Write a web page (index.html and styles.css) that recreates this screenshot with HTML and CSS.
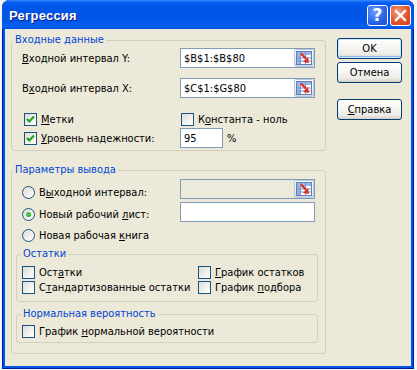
FILE: index.html
```html
<!DOCTYPE html>
<html lang="ru">
<head>
<meta charset="utf-8">
<title>Регрессия</title>
<link rel="stylesheet" href="styles.css">
</head>
<body>
<div class="win">
  <div class="titlebar">
    <span class="ttext">Регрессия</span>
    <div class="tbtns">
      <span class="tb help">?</span>
      <span class="tb close"><svg width="13" height="13" viewBox="0 0 13 13"><path d="M2 2 L11 11 M11 2 L2 11" stroke="#fff" stroke-width="2.4" stroke-linecap="square"/></svg></span>
    </div>
  </div>
  <div class="client">
    <div class="main">
      <div class="grp g1">
        <div class="lg">Входные данные</div>
        <div class="g1in">
          <div class="frow r1">
            <span class="flbl"><u>В</u>ходной интервал Y:</span>
            <div class="field"><span class="ftext">$B$1:$B$80</span><span class="rbtn"><svg width="16" height="14" viewBox="0 0 16 14"><rect x="0.5" y="0.5" width="15" height="13" fill="#fff" stroke="#5B7FC0"/><rect x="1" y="1" width="14" height="3" fill="#9DB5E2"/><rect x="1" y="1" width="3" height="12" fill="#9DB5E2"/><path d="M1 7H15M1 10H15M4.5 1V13M9.5 1V13" stroke="#7A98D0"/><path d="M5 2.5 L9.8 7.5" stroke="#E0301A" stroke-width="2.4"/><path d="M13 12 L7 11 L12 6 Z" fill="#E0301A"/></svg></span></div>
          </div>
          <div class="frow r2">
            <span class="flbl">В<u>х</u>одной интервал X:</span>
            <div class="field"><span class="ftext">$C$1:$G$80</span><span class="rbtn"><svg width="16" height="14" viewBox="0 0 16 14"><rect x="0.5" y="0.5" width="15" height="13" fill="#fff" stroke="#5B7FC0"/><rect x="1" y="1" width="14" height="3" fill="#9DB5E2"/><rect x="1" y="1" width="3" height="12" fill="#9DB5E2"/><path d="M1 7H15M1 10H15M4.5 1V13M9.5 1V13" stroke="#7A98D0"/><path d="M5 2.5 L9.8 7.5" stroke="#E0301A" stroke-width="2.4"/><path d="M13 12 L7 11 L12 6 Z" fill="#E0301A"/></svg></span></div>
          </div>
          <div class="crow r3">
            <label class="opt w157"><span class="cb on"><svg width="11" height="11" viewBox="0 0 11 11"><path d="M2 5 L4.3 7.5 L9 2.5" fill="none" stroke="#21A121" stroke-width="2.2"/></svg></span><span><u>М</u>етки</span></label>
            <label class="opt"><span class="cb"></span><span>К<u>о</u>нстанта - ноль</span></label>
          </div>
          <div class="crow r4">
            <label class="opt w156"><span class="cb on"><svg width="11" height="11" viewBox="0 0 11 11"><path d="M2 5 L4.3 7.5 L9 2.5" fill="none" stroke="#21A121" stroke-width="2.2"/></svg></span><span><u>У</u>ровень надежности:</span></label>
            <div class="field small"><span class="ftext">95</span></div>
            <span class="pct">%</span>
          </div>
        </div>
      </div>

      <div class="grp g2">
        <div class="lg">Параметры вывода</div>
        <div class="g2in">
          <div class="rrow rr1">
            <label class="opt w158 rl1"><span class="rb"></span><span>В<u>ы</u>ходной интервал:</span></label>
            <div class="field dis"><span class="ftext"></span><span class="rbtn"><svg width="16" height="14" viewBox="0 0 16 14"><rect x="0.5" y="0.5" width="15" height="13" fill="#fff" stroke="#5B7FC0"/><rect x="1" y="1" width="14" height="3" fill="#9DB5E2"/><rect x="1" y="1" width="3" height="12" fill="#9DB5E2"/><path d="M1 7H15M1 10H15M4.5 1V13M9.5 1V13" stroke="#7A98D0"/><path d="M5 2.5 L9.8 7.5" stroke="#E0301A" stroke-width="2.4"/><path d="M13 12 L7 11 L12 6 Z" fill="#E0301A"/></svg></span></div>
          </div>
          <div class="rrow rr2">
            <label class="opt w158 rl2"><span class="rb on"><span class="dot"></span></span><span>Новый рабочий <u>л</u>ист:</span></label>
            <div class="field"><span class="ftext"></span></div>
          </div>
          <div class="crow rr3">
            <label class="opt"><span class="rb"></span><span>Новая рабочая <u>к</u>нига</span></label>
          </div>

          <div class="grp sub s1">
            <div class="lg">Остатки</div>
            <div class="s1in">
              <div class="crow">
                <label class="opt w176"><span class="cb"></span><span>Ост<u>а</u>тки</span></label>
                <label class="opt"><span class="cb"></span><span><u>Г</u>рафик остатков</span></label>
              </div>
              <div class="crow">
                <label class="opt w176"><span class="cb"></span><span>С<u>т</u>андартизованные остатки</span></label>
                <label class="opt"><span class="cb"></span><span>График <u>п</u>одбора</span></label>
              </div>
            </div>
          </div>

          <div class="grp sub s2">
            <div class="lg">Нормальная вероятность</div>
            <div class="s2in">
              <div class="crow">
                <label class="opt"><span class="cb"></span><span>График <u>н</u>ормальной вероятности</span></label>
              </div>
            </div>
          </div>
        </div>
      </div>
    </div>

    <div class="btns">
      <button class="btn def">OK</button>
      <button class="btn">Отмена</button>
      <button class="btn help2"><u>С</u>правка</button>
    </div>
  </div>
</div>
</body>
</html>
```

FILE: styles.css
```css
html, body {
  margin: 0;
  padding: 0;
}
body {
  width: 417px;
  height: 370px;
  overflow: hidden;
  background: #f4f4f4;
  font-family: "DejaVu Sans Condensed", "DejaVu Sans", sans-serif;
  font-stretch: condensed;
  font-size: 11px;
  line-height: 13px;
  color: #000;
}
u { text-decoration: underline; text-underline-offset: 1px; }

.win {
  margin-left: 2px;
  width: 412px;
  height: 369px;
  box-sizing: border-box;
  background: #0055E5;
  border-radius: 8px 8px 0 0;
  box-shadow: inset 1px 0 0 #0019CF, inset -1px 0 0 #001DA0, inset 0 -1px 0 #001DA0;
  display: flex;
  flex-direction: column;
}

.titlebar {
  height: 29px;
  flex: none;
  border-radius: 8px 8px 0 0;
  background: linear-gradient(to bottom, #3A8CFF 0px, #0A61F0 2px, #0058EE 5px, #0054E3 14px, #0058EA 22px, #0562F4 26px, #0050DD 29px);
  display: flex;
  align-items: center;
  justify-content: space-between;
  padding: 0 3px 0 7px;
  box-sizing: border-box;
}
.ttext {
  font-family: "Liberation Sans", sans-serif;
  font-stretch: normal;
  font-weight: bold;
  font-size: 13px;
  color: #fff;
  text-shadow: 1px 1px 0 #0A1883;
  letter-spacing: 0.2px;
  margin-top: 1px;
}
.tbtns {
  display: flex;
  gap: 2px;
  margin-top: 1px;
}
.tb {
  width: 21px;
  height: 21px;
  box-sizing: border-box;
  border: 1px solid #fff;
  border-radius: 3px;
  display: flex;
  align-items: center;
  justify-content: center;
}
.help {
  background: radial-gradient(circle at 35% 30%, #6E9CFF 0%, #2B67E8 55%, #1A50D0 100%);
  color: #fff;
  font-family: "DejaVu Sans", sans-serif;
  font-stretch: normal;
  font-weight: bold;
  font-size: 17px;
  line-height: 1;
}
.close {
  background: radial-gradient(circle at 35% 30%, #F39A78 0%, #E2552E 55%, #C8401C 100%);
}

.client {
  flex: 1;
  margin: 0 3px 3px 3px;
  background: #ECE9D8;
  display: flex;
  align-items: flex-start;
}

.main {
  width: 315px;
  margin-left: 6px;
  display: flex;
  flex-direction: column;
}

.grp {
  border: 1px solid #D0D0BF;
  border-radius: 3px;
  box-sizing: border-box;
}
.lg {
  width: fit-content;
  margin: -8px 0 0 1px;
  padding: 0 2px;
  background: #ECE9D8;
  color: #0046D5;
  line-height: 14px;
}

.g1 { margin-top: 11px; }
.g1in {
  padding: 1px 0 2px 10px;
  display: flex;
  flex-direction: column;
}
.frow {
  display: flex;
  align-items: center;
  height: 20px;
}
.r2 { margin-top: 10px; }
.r3 { margin-top: 15px; padding-left: 2px; }
.r4 { margin-top: 2px; padding-left: 2px; height: 20px; }
.flbl { width: 158px; flex: none; }

.field {
  width: 135px;
  height: 20px;
  box-sizing: border-box;
  border: 1px solid #7F9DB9;
  background: #fff;
  display: flex;
  align-items: center;
  justify-content: space-between;
  flex: none;
}
.field.small { width: 43px; }
.field.dis { background: #EBEADB; }
.ftext { padding-left: 3px; }
.rbtn {
  width: 20px;
  height: 18px;
  box-sizing: border-box;
  border: 1px solid #B8C8E0;
  border-radius: 2px;
  background: linear-gradient(to bottom, #FFFFFF, #ECECE4 70%, #D8D8D0);
  display: flex;
  align-items: center;
  justify-content: center;
}
.pct { margin-left: 4px; }

.crow {
  display: flex;
  align-items: center;
}
.opt {
  display: flex;
  align-items: center;
  gap: 4px;
  flex: none;
}
.w157 { width: 157px; }
.w156 { width: 156px; }
.w158 { width: 158px; }
.w176 { width: 176px; }

.cb {
  width: 13px;
  height: 13px;
  box-sizing: border-box;
  border: 1px solid #1C5180;
  background: linear-gradient(135deg, #DCDCD7 0%, #F2F2EE 60%, #FFFFFF 100%);
  display: flex;
  align-items: center;
  justify-content: center;
  flex: none;
}
.rb {
  width: 13px;
  height: 13px;
  box-sizing: border-box;
  border: 1px solid #1C5180;
  border-radius: 50%;
  background: linear-gradient(135deg, #DCDCD7 0%, #F2F2EE 60%, #FFFFFF 100%);
  display: flex;
  align-items: center;
  justify-content: center;
  flex: none;
}
.dot {
  width: 5px;
  height: 5px;
  border-radius: 50%;
  background: radial-gradient(circle at 40% 40%, #55D155, #21A121);
}

.g2 { margin-top: 19px; }
.g2in {
  padding: 2px 0 10px 10px;
  display: flex;
  flex-direction: column;
}
.rrow {
  display: flex;
  align-items: flex-start;
  height: 20px;
}
.rr1 .rl1 { margin-top: 7px; }
.rr2 { margin-top: 3px; }
.rr2 .rl2 { margin-top: 6px; }
.rr3 { margin-top: 7px; }

.sub {
  margin-left: -6px;
  width: 302px;
}
.sub .lg { margin-left: 4px; }
.s1 { margin-top: 12px; }
.s1in {
  padding: 5px 0 7px 5px;
  display: flex;
  flex-direction: column;
  gap: 2px;
}
.s2 { margin-top: 12px; }
.s2in {
  padding: 4px 0 4px 5px;
}

.btns {
  margin-left: 11px;
  margin-top: 9px;
  display: flex;
  flex-direction: column;
}
.btn {
  width: 65px;
  height: 21px;
  box-sizing: border-box;
  border: 1px solid #003C74;
  border-radius: 3px;
  background: linear-gradient(to bottom, #FFFFFF 0%, #F4F4F0 50%, #ECEBE6 80%, #D6D0C5 100%);
  font-family: inherit;
  font-stretch: condensed;
  font-size: 11px;
  color: #000;
  padding: 0;
  margin: 0;
}
.btn.def {
  box-shadow: inset 0 0 0 1px #CEE7FF, inset 0 -1px 0 1px #98B8EA;
}
.btn + .btn { margin-top: 3px; }
.btn.help2 { margin-top: 16px; }
```
